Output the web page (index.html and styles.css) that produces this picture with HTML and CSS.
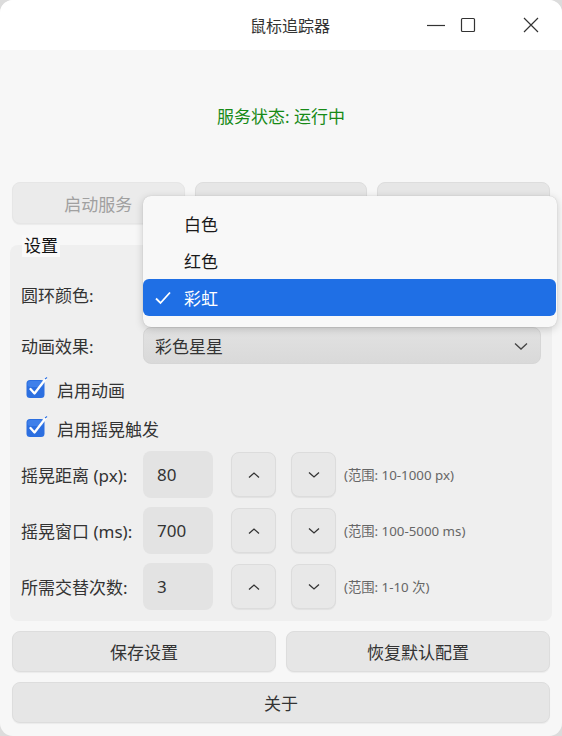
FILE: index.html
```html
<!DOCTYPE html>
<html lang="zh-CN">
<head>
<meta charset="utf-8">
<title>鼠标追踪器</title>
<link rel="stylesheet" href="styles.css">
</head>
<body>
<div class="window">
  <div class="titlebar">
    <div class="title">鼠标追踪器</div>
    <div class="controls">
      <span class="ctl min"><svg width="20" height="20" viewBox="0 0 20 20"><path d="M1 10.5h18" stroke="#333" stroke-width="1.2" fill="none"/></svg></span>
      <span class="ctl max"><svg width="20" height="20" viewBox="0 0 20 20"><rect x="3.5" y="3.5" width="13" height="13" rx="1" stroke="#333" stroke-width="1.2" fill="none"/></svg></span>
      <span class="ctl close"><svg width="20" height="20" viewBox="0 0 20 20"><path d="M3 3L17 17M17 3L3 17" stroke="#333" stroke-width="1.2" fill="none"/></svg></span>
    </div>
  </div>
  <div class="content">
    <div class="status">服务状态: 运行中</div>
    <div class="svc-row">
      <button class="btn disabled">启动服务</button>
      <button class="btn">停止服务</button>
      <button class="btn">重启服务</button>
    </div>
    <div class="group">
      <div class="group-title">设置</div>
      <div class="field-row">
        <span class="label">圆环颜色:</span>
        <div class="combo open"><span></span><svg class="chev" width="14" height="10" viewBox="0 0 14 10"><path d="M1 2.5L7 8L13 2.5" stroke="#444" stroke-width="1.3" fill="none"/></svg></div>
      </div>
      <div class="field-row">
        <span class="label">动画效果:</span>
        <div class="combo"><span>彩色星星</span><svg class="chev" width="14" height="10" viewBox="0 0 14 10"><path d="M1 2.5L7 8L13 2.5" stroke="#444" stroke-width="1.3" fill="none"/></svg></div>
      </div>
      <div class="checks">
        <label class="check"><span class="box"><svg width="22" height="22" viewBox="0 0 22 22"><rect x="0.5" y="3" width="18" height="18" rx="3.5" fill="#2c6fe0"/><rect x="1.5" y="4" width="16" height="6" rx="3" fill="#3f80ea"/><path d="M4.5 12L8.5 16.5L20 1.5" stroke="#fff" stroke-width="2.3" fill="none" stroke-linecap="round" stroke-linejoin="round"/><path d="M19 2L21 0.5" stroke="#2c6fe0" stroke-width="1.2" fill="none"/></svg></span>启用动画</label>
        <label class="check"><span class="box"><svg width="22" height="22" viewBox="0 0 22 22"><rect x="0.5" y="3" width="18" height="18" rx="3.5" fill="#2c6fe0"/><rect x="1.5" y="4" width="16" height="6" rx="3" fill="#3f80ea"/><path d="M4.5 12L8.5 16.5L20 1.5" stroke="#fff" stroke-width="2.3" fill="none" stroke-linecap="round" stroke-linejoin="round"/><path d="M19 2L21 0.5" stroke="#2c6fe0" stroke-width="1.2" fill="none"/></svg></span>启用摇晃触发</label>
      </div>
      <div class="spins">
        <div class="spin-row">
          <span class="label">摇晃距离 (px):</span>
          <div class="num">80</div>
          <button class="step up"><svg width="14" height="8" viewBox="0 0 14 8"><path d="M2 6.5L7 2L12 6.5" stroke="#333" stroke-width="1.3" fill="none"/></svg></button>
          <button class="step"><svg width="14" height="8" viewBox="0 0 14 8"><path d="M2 1.5L7 6L12 1.5" stroke="#333" stroke-width="1.3" fill="none"/></svg></button>
          <span class="hint">(范围: 10-1000 px)</span>
        </div>
        <div class="spin-row">
          <span class="label">摇晃窗口 (ms):</span>
          <div class="num">700</div>
          <button class="step up"><svg width="14" height="8" viewBox="0 0 14 8"><path d="M2 6.5L7 2L12 6.5" stroke="#333" stroke-width="1.3" fill="none"/></svg></button>
          <button class="step"><svg width="14" height="8" viewBox="0 0 14 8"><path d="M2 1.5L7 6L12 1.5" stroke="#333" stroke-width="1.3" fill="none"/></svg></button>
          <span class="hint">(范围: 100-5000 ms)</span>
        </div>
        <div class="spin-row">
          <span class="label">所需交替次数:</span>
          <div class="num">3</div>
          <button class="step up"><svg width="14" height="8" viewBox="0 0 14 8"><path d="M2 6.5L7 2L12 6.5" stroke="#333" stroke-width="1.3" fill="none"/></svg></button>
          <button class="step"><svg width="14" height="8" viewBox="0 0 14 8"><path d="M2 1.5L7 6L12 1.5" stroke="#333" stroke-width="1.3" fill="none"/></svg></button>
          <span class="hint">(范围: 1-10 次)</span>
        </div>
      </div>
    </div>
    <div class="bottom-row">
      <button class="btn">保存设置</button>
      <button class="btn">恢复默认配置</button>
    </div>
    <button class="btn wide">关于</button>
  </div>
  <div class="popup">
    <div class="item">白色</div>
    <div class="item">红色</div>
    <div class="item selected"><svg class="tick" width="18" height="16" viewBox="0 0 18 16"><path d="M2 8.5L6.5 13L16 2.5" stroke="#fff" stroke-width="1.8" fill="none"/></svg>彩虹</div>
  </div>
</div>
</body>
</html>
```
FILE: styles.css
```css
* { box-sizing: border-box; }
html, body { margin: 0; padding: 0; }
body {
  background: #dcdcdc;
  font-family: "Noto Sans", "Noto Sans CJK SC", sans-serif;
  color: #2b2b2b;
  width: 562px;
  height: 736px;
  overflow: hidden;
}
.window {
  position: relative;
  width: 562px;
  height: 736px;
  background: #f7f7f7;
  border-radius: 13px;
  overflow: hidden;
  display: flex;
  flex-direction: column;
}
.titlebar {
  height: 50px;
  background: #ffffff;
  display: flex;
  align-items: center;
  position: relative;
}
.title {
  flex: 1;
  text-align: center;
  font-size: 16px;
  color: #333;
  padding-left: 18px;
}
.controls {
  position: absolute;
  right: 0;
  top: 0;
  height: 50px;
  display: flex;
  align-items: center;
}
.ctl {
  width: 20px;
  height: 20px;
  display: flex;
}
.ctl.min { margin-right: 12px; }
.ctl.max { margin-right: 43px; }
.ctl.close { margin-right: 21px; }
.content {
  flex: 1;
  padding: 0 11px;
  display: flex;
  flex-direction: column;
}
.status {
  height: 132px;
  padding-top: 55px;
  line-height: 24px;
  text-align: center;
  font-size: 17px;
  color: #178a17;
}
.btn {
  font-family: inherit;
  font-size: 17px;
  color: #333;
  background: #e6e6e6;
  border: 1px solid #dddddd;
  border-radius: 8px;
  box-shadow: 0 1px 1px rgba(0,0,0,0.05);
  padding: 0;
  margin: 0;
}
.btn.disabled { color: #a0a0a0; background: #ebebeb; border-color: #e6e6e6; }
.svc-row {
  height: 42px;
  display: grid;
  grid-template-columns: 1fr 1fr 1fr;
  gap: 10px;
  margin: 0 1px;
}
.group {
  position: relative;
  margin: 21px -1px 0;
  background: #efefef;
  border-radius: 8px;
  padding: 31px 11px 11px;
}
.group-title {
  position: absolute;
  left: 12px;
  top: -10px;
  font-size: 17px;
  line-height: 22px;
  padding: 0 2px;
  background: #f9f9f9;
  color: #111;
}
.field-row {
  display: flex;
  align-items: center;
  height: 37px;
  margin-bottom: 14px;
}
.field-row:nth-of-type(3) { margin-bottom: 13px; }
.label {
  width: 122px;
  font-size: 17px;
  color: #333;
  flex-shrink: 0;
}
.combo {
  flex: 1;
  height: 37px;
  border-radius: 8px;
  background: linear-gradient(#e2e2e2, #d9d9d9);
  border: 1px solid #d6d6d6;
  display: flex;
  align-items: center;
  justify-content: space-between;
  padding: 0 12px 0 11px;
  font-size: 17px;
  color: #333;
}
.checks {
  display: flex;
  flex-direction: column;
  gap: 15px;
  margin-bottom: 11px;
}
.check {
  height: 24px;
  display: flex;
  align-items: center;
  font-size: 17px;
  color: #333;
}
.box {
  width: 22px;
  height: 22px;
  margin-left: 5px;
  margin-right: 9px;
  display: flex;
  margin-top: -3px;
}
.spins {
  display: flex;
  flex-direction: column;
  gap: 9px;
}
.spin-row {
  display: flex;
  align-items: center;
  height: 47px;
}
.num {
  width: 70px;
  height: 47px;
  background: #e3e3e3;
  border-radius: 8px;
  display: flex;
  align-items: center;
  padding-left: 14px;
  font-size: 17px;
  color: #333;
}
.step {
  width: 45px;
  height: 45px;
  background: #e8e8e8;
  border: 1px solid #dcdcdc;
  border-radius: 8px;
  box-shadow: 0 1px 1px rgba(0,0,0,0.06);
  display: flex;
  align-items: center;
  justify-content: center;
  padding: 0;
  margin: 0 0 0 15px;
}
.step.up { margin-left: 18px; }
.hint {
  margin-left: 8px;
  font-size: 13.3px;
  color: #666;
}
.bottom-row {
  display: grid;
  grid-template-columns: 1fr 1fr;
  gap: 10px;
  height: 41px;
  margin: 10px 1px 0;
}
.btn.wide {
  height: 41px;
  margin: 10px 1px 0;
}
.popup {
  position: absolute;
  left: 143px;
  top: 196px;
  width: 414px;
  height: 131px;
  background: #f8f8f8;
  border-radius: 8px;
  box-shadow: 0 2px 8px rgba(0,0,0,0.18), 0 0 1px rgba(0,0,0,0.2);
  padding: 9px 0 10px;
}
.item {
  height: 37px;
  display: flex;
  align-items: center;
  padding-left: 41px;
  font-size: 17px;
  color: #1a1a1a;
}
.item.selected {
  background: #1f6fe5;
  color: #fff;
  border-radius: 6px;
  padding-left: 11px;
  margin-right: 1px;
}
.tick { margin-right: 12px; }
```
